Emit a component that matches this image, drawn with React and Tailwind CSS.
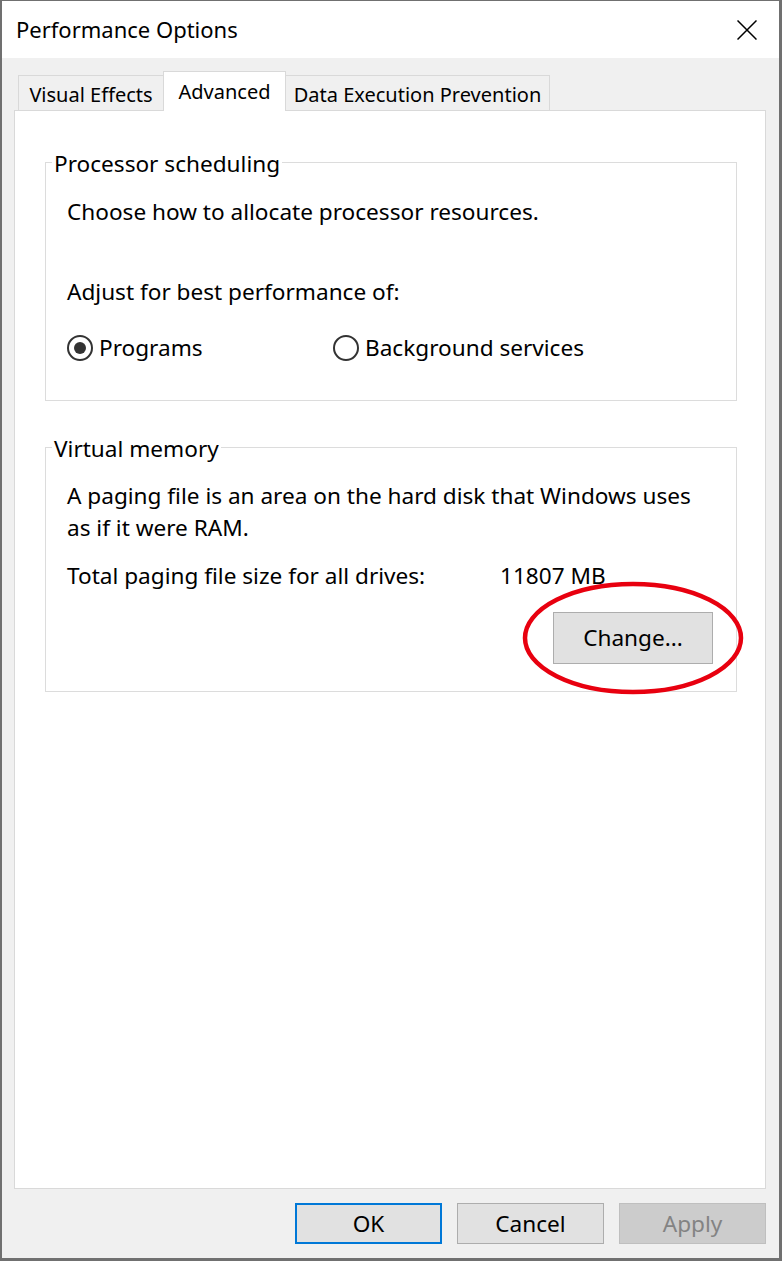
import React from "react";

function Radio({ checked, label, className = "" }) {
  return (
    <label className={`flex items-center gap-[6px] ${className}`}>
      <span className="flex h-[26px] w-[26px] items-center justify-center rounded-full border-2 border-[#333333]">
        {checked && <span className="h-[12px] w-[12px] rounded-full bg-[#333333]" />}
      </span>
      <span>{label}</span>
    </label>
  );
}

function Tab({ label, active, className = "" }) {
  if (active) {
    return (
      <div className={`relative z-10 flex h-[40px] items-center justify-center whitespace-nowrap border border-b-0 border-[#d9d9d9] bg-white ${className}`}>
        {label}
      </div>
    );
  }
  return (
    <div className={`mb-[1px] flex h-[35px] items-center justify-center whitespace-nowrap border border-b-0 border-[#d9d9d9] bg-[#f0f0f0] pt-[3px] ${className}`}>
      {label}
    </div>
  );
}

export default function App() {
  return (
    <div className="relative flex h-[1261px] w-[782px] flex-col border-t border-l-2 border-r-[3px] border-b-[3px] border-[#707070] bg-[#f0f0f0] font-['Segoe_UI','Noto_Sans',sans-serif] text-[22.6px] text-black">
      {/* title bar */}
      <div className="flex h-[57px] items-center justify-between bg-white pl-[14px] pr-[22px] text-[22px]">
        <span>Performance Options</span>
        <svg width="20" height="20" viewBox="0 0 20 20" fill="none" stroke="#000" strokeWidth="1.5">
          <path d="M0.5 0.5 L19.5 19.5 M19.5 0.5 L0.5 19.5" />
        </svg>
      </div>

      <div className="flex flex-1 flex-col pl-[12px] pr-[13px] pt-[13px]">
        <div className="-mb-[1px] flex h-[40px] items-end pl-[4px] text-[20px]">
          <Tab label="Visual Effects" className="w-[146px]" />
          <Tab label="Advanced" active className="-ml-[1px] w-[123px]" />
          <Tab label="Data Execution Prevention" className="-ml-[1px] w-[265px]" />
        </div>

        <div className="flex-1 border border-[#d9d9d9] bg-white pl-[30px] pr-[28px] pt-[37px]">
          <fieldset className="border border-[#dcdcdc]">
            <legend className="ml-[6px] px-[2px] leading-[28px]">
              <span className="relative top-[2px]">Processor scheduling</span>
            </legend>
            <div className="pb-[37px] pl-[21px]">
              <p className="mt-[21px] leading-[30px]">Choose how to allocate processor resources.</p>
              <p className="mt-[50px] leading-[30px]">Adjust for best performance of:</p>
              <div className="mt-[26px] flex h-[30px] items-center">
                <Radio checked label="Programs" className="w-[266px]" />
                <Radio label="Background services" />
              </div>
            </div>
          </fieldset>

          <fieldset className="mt-[32px] border border-[#dcdcdc]">
            <legend className="ml-[6px] px-[2px] leading-[28px]">
              <span className="relative top-[2px]">Virtual memory</span>
            </legend>
            <div className="pb-[27px] pl-[21px] pr-[23px]">
              <p className="mt-[19px] whitespace-nowrap leading-[32px]">
                A paging file is an area on the hard disk that Windows uses
                <br />
                as if it were RAM.
              </p>
              <div className="mt-[17px] flex leading-[30px]">
                <span className="w-[433px]">Total paging file size for all drives:</span>
                <span>11807 MB</span>
              </div>
              <div className="mt-[21px] flex justify-end">
                <button className="h-[52px] w-[160px] border border-[#adadad] bg-[#e1e1e1]">Change...</button>
              </div>
            </div>
          </fieldset>
        </div>

        <div className="flex h-[69px] items-center justify-end gap-[15px]">
          <button className="h-[41px] w-[147px] border-2 border-[#0078d7] bg-[#e1e1e1]">OK</button>
          <button className="h-[41px] w-[147px] border border-[#adadad] bg-[#e1e1e1]">Cancel</button>
          <button className="h-[41px] w-[147px] border border-[#bfbfbf] bg-[#cccccc] text-[#838383]">Apply</button>
        </div>
      </div>

      {/* red annotation */}
      <svg className="pointer-events-none absolute left-[518px] top-[577px]" width="228" height="120" viewBox="0 0 228 120" fill="none">
        <ellipse cx="113" cy="60" rx="108" ry="54" stroke="#e8000f" strokeWidth="4.5" />
      </svg>
    </div>
  );
}
